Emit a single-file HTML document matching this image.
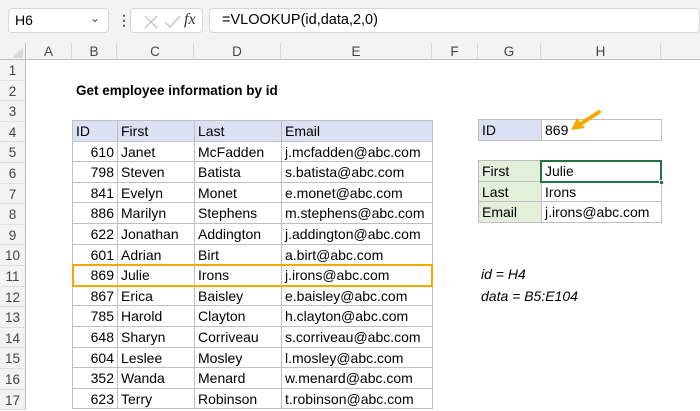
<!DOCTYPE html>
<html><head><meta charset="utf-8"><style>
*{margin:0;padding:0;box-sizing:border-box}
body{width:700px;height:400px;overflow:hidden;background:#fff;font-family:"Liberation Sans",Arial,sans-serif;font-size:14px;color:#000;position:relative}
.a{position:absolute}
.top{left:0;top:0;width:700px;height:43px;background:#f3f3f3}
.box{background:#fff;border:1px solid #d6d6d6;border-radius:4px}
.ch{top:43px;height:17px;background:#f3f3f3;border-right:1px solid #d8d8d8;border-bottom:1px solid #bdbdbd;text-align:center;font-size:13.5px;color:#444;line-height:17px}
.rh{left:0;width:26px;height:20.6px;line-height:21px;background:#f3f3f3;border-bottom:1px solid #dedede;border-right:1px solid #bdbdbd;text-align:center;font-size:13.5px;color:#444}
.c{height:21.6px;line-height:21px;border:1px solid #bfbfbf;margin:-1px 0 0 -1px;padding:0 3px;white-space:nowrap;overflow:hidden}
.r{text-align:right}
</style></head><body>
<div class="a top"></div>
<div class="a box" style="left:8px;top:8px;width:101px;height:25px;padding:3px 6px;font-size:14px">H6<span style="position:absolute;right:8px;top:2px;font-size:12px;color:#444">&#8964;</span></div>
<div class="a" style="left:117px;top:12px;color:#555;font-size:14px;font-weight:bold">&#8942;</div>
<div class="a box" style="left:130px;top:8px;width:73px;height:25px">
<svg width="73" height="25" style="position:absolute;left:0;top:0"><path d="M14 7 L26 19 M26 7 L14 19" stroke="#bbb" stroke-width="1.2" fill="none"/><path d="M34 13 L39 18 L49 7" stroke="#bbb" stroke-width="1.2" fill="none"/></svg>
<span style="position:absolute;left:53px;top:2px;font-family:'Liberation Serif',serif;font-style:italic;font-size:16px;color:#333">fx</span></div>
<div class="a box" style="left:209px;top:8px;width:491px;height:25px;padding:3px 12px;font-size:14.5px">=VLOOKUP(id,data,2,0)</div>
<div class="a" style="left:0;top:43px;width:26px;height:17px;background:#f3f3f3;border-right:1px solid #bdbdbd;border-bottom:1px solid #bdbdbd"></div>
<svg class="a" style="left:12px;top:47px" width="12" height="12"><path d="M11 0 L11 11 L0 11 Z" fill="#dadada"/></svg>
<div class="a ch" style="left:26px;width:46px">A</div>
<div class="a ch" style="left:72px;width:45px">B</div>
<div class="a ch" style="left:117px;width:77px">C</div>
<div class="a ch" style="left:194px;width:87px">D</div>
<div class="a ch" style="left:281px;width:151px">E</div>
<div class="a ch" style="left:432px;width:46px">F</div>
<div class="a ch" style="left:478px;width:63px">G</div>
<div class="a ch" style="left:541px;width:120px">H</div>
<div class="a ch" style="left:661px;width:39px;border-right:none"></div>
<div class="a rh" style="top:60px">1</div>
<div class="a rh" style="top:80.6px">2</div>
<div class="a rh" style="top:101.2px">3</div>
<div class="a rh" style="top:121.8px">4</div>
<div class="a rh" style="top:142.4px">5</div>
<div class="a rh" style="top:163px">6</div>
<div class="a rh" style="top:183.6px">7</div>
<div class="a rh" style="top:204.2px">8</div>
<div class="a rh" style="top:224.8px">9</div>
<div class="a rh" style="top:245.4px">10</div>
<div class="a rh" style="top:266px">11</div>
<div class="a rh" style="top:286.6px">12</div>
<div class="a rh" style="top:307.2px">13</div>
<div class="a rh" style="top:327.8px">14</div>
<div class="a rh" style="top:348.4px">15</div>
<div class="a rh" style="top:369px">16</div>
<div class="a rh" style="top:389.6px">17</div>
<div class="a" style="left:76px;top:80px;line-height:21px;font-weight:bold;font-size:13.5px">Get employee information by id</div>

<div class="a" style="left:73px;top:121px;display:grid;grid-template-columns:45px 77px 87px 151px">
<div class="c" style="background:#d9e1f2">ID</div><div class="c" style="background:#d9e1f2">First</div><div class="c" style="background:#d9e1f2">Last</div><div class="c" style="background:#d9e1f2">Email</div>
<div class="c r">610</div><div class="c">Janet</div><div class="c">McFadden</div><div class="c">j.mcfadden@abc.com</div>
<div class="c r">798</div><div class="c">Steven</div><div class="c">Batista</div><div class="c">s.batista@abc.com</div>
<div class="c r">841</div><div class="c">Evelyn</div><div class="c">Monet</div><div class="c">e.monet@abc.com</div>
<div class="c r">886</div><div class="c">Marilyn</div><div class="c">Stephens</div><div class="c">m.stephens@abc.com</div>
<div class="c r">622</div><div class="c">Jonathan</div><div class="c">Addington</div><div class="c">j.addington@abc.com</div>
<div class="c r">601</div><div class="c">Adrian</div><div class="c">Birt</div><div class="c">a.birt@abc.com</div>
<div class="c r">869</div><div class="c">Julie</div><div class="c">Irons</div><div class="c">j.irons@abc.com</div>
<div class="c r">867</div><div class="c">Erica</div><div class="c">Baisley</div><div class="c">e.baisley@abc.com</div>
<div class="c r">785</div><div class="c">Harold</div><div class="c">Clayton</div><div class="c">h.clayton@abc.com</div>
<div class="c r">648</div><div class="c">Sharyn</div><div class="c">Corriveau</div><div class="c">s.corriveau@abc.com</div>
<div class="c r">604</div><div class="c">Leslee</div><div class="c">Mosley</div><div class="c">l.mosley@abc.com</div>
<div class="c r">352</div><div class="c">Wanda</div><div class="c">Menard</div><div class="c">w.menard@abc.com</div>
<div class="c r">623</div><div class="c">Terry</div><div class="c">Robinson</div><div class="c">t.robinson@abc.com</div>
</div>
<div class="a" style="left:72px;top:264px;width:361px;height:23px;border:2.5px solid #f5a800"></div>

<div class="a" style="left:479px;top:120px;display:grid;grid-template-columns:63px 120px">
<div class="c" style="background:#d9e1f2">ID</div><div class="c">869</div>
</div>
<div class="a" style="left:479px;top:161px;display:grid;grid-template-columns:63px 120px">
<div class="c" style="background:#e2efda">First</div><div class="c">Julie</div>
<div class="c" style="background:#e2efda">Last</div><div class="c">Irons</div>
<div class="c" style="background:#e2efda">Email</div><div class="c">j.irons@abc.com</div>
</div>
<div class="a" style="left:540px;top:160px;width:122px;height:23px;border:2px solid #217346"></div>
<div class="a" style="left:659px;top:180px;width:5px;height:5px;background:#217346;border:1px solid #fff"></div>
<svg class="a" style="left:565px;top:108px" width="40" height="30"><path d="M34 4 L14 17" stroke="#f5a800" stroke-width="4" stroke-linecap="round"/><path d="M6 22 L12 10 L20 20 Z" fill="#f5a800"/></svg>
<div class="a" style="left:481px;top:264px;font-style:italic;line-height:20px">id = H4</div>
<div class="a" style="left:481px;top:286px;font-style:italic;line-height:20px">data = B5:E104</div>
</body></html>
